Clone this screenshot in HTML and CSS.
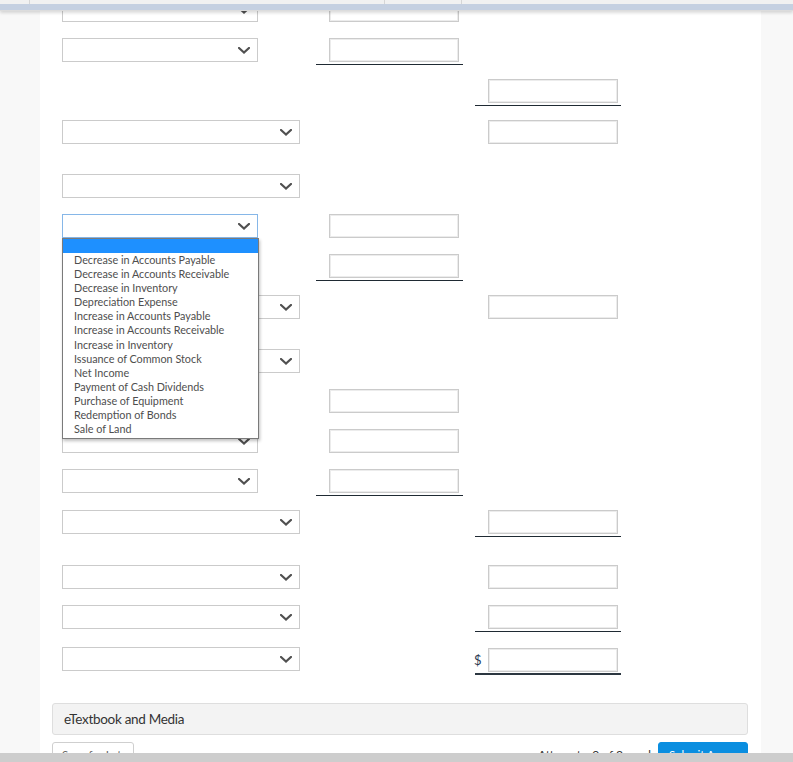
FILE: index.html
```html
<!DOCTYPE html>
<html lang="en">
<head>
<meta charset="utf-8">
<title>Statement of Cash Flows</title>
<link rel="stylesheet" href="styles.css">
</head>
<body>
<div class="topbar">
  <div class="tabs"><span class="tab tab-a"></span><span class="tab tab-b"></span><span class="tab tab-c"></span></div>
  <div class="band"></div>
</div>

<main class="page">
  <section class="panel">
    <div class="rows">
      <!-- r0 -->
      <div class="row first">
        <div class="c1"><div class="sel short"><svg class="chev" viewBox="0 0 12 7"><polyline points="1,1 6,5.5 11,1"/></svg></div></div>
        <div class="c2"><div class="inp"></div></div>
      </div>
      <!-- r1 -->
      <div class="row u">
        <div class="c1"><div class="sel short"><svg class="chev" viewBox="0 0 12 7"><polyline points="1,1 6,5.5 11,1"/></svg></div></div>
        <div class="c2 line"><div class="inp"></div></div>
      </div>
      <!-- r2 -->
      <div class="row u">
        <div class="c3 line"><div class="inp"></div></div>
      </div>
      <!-- r3 -->
      <div class="row gap">
        <div class="c1"><div class="sel long"><svg class="chev" viewBox="0 0 12 7"><polyline points="1,1 6,5.5 11,1"/></svg></div></div>
        <div class="c3"><div class="inp"></div></div>
      </div>
      <!-- r4 -->
      <div class="row">
        <div class="c1"><div class="sel long"><svg class="chev" viewBox="0 0 12 7"><polyline points="1,1 6,5.5 11,1"/></svg></div></div>
      </div>
      <!-- r5 (open) -->
      <div class="row">
        <div class="c1">
          <div class="sel short focus"><svg class="chev" viewBox="0 0 12 7"><polyline points="1,1 6,5.5 11,1"/></svg>
            <ul class="dropdown">
              <li class="picked">&nbsp;</li>
              <li>Decrease in Accounts Payable</li>
              <li>Decrease in Accounts Receivable</li>
              <li>Decrease in Inventory</li>
              <li>Depreciation Expense</li>
              <li>Increase in Accounts Payable</li>
              <li>Increase in Accounts Receivable</li>
              <li>Increase in Inventory</li>
              <li>Issuance of Common Stock</li>
              <li>Net Income</li>
              <li>Payment of Cash Dividends</li>
              <li>Purchase of Equipment</li>
              <li>Redemption of Bonds</li>
              <li>Sale of Land</li>
            </ul>
          </div>
        </div>
        <div class="c2"><div class="inp"></div></div>
      </div>
      <!-- r6 -->
      <div class="row u">
        <div class="c1"><div class="sel short"><svg class="chev" viewBox="0 0 12 7"><polyline points="1,1 6,5.5 11,1"/></svg></div></div>
        <div class="c2 line"><div class="inp"></div></div>
      </div>
      <!-- r7 -->
      <div class="row gap">
        <div class="c1"><div class="sel long"><svg class="chev" viewBox="0 0 12 7"><polyline points="1,1 6,5.5 11,1"/></svg></div></div>
        <div class="c3"><div class="inp"></div></div>
      </div>
      <!-- r8 -->
      <div class="row">
        <div class="c1"><div class="sel long"><svg class="chev" viewBox="0 0 12 7"><polyline points="1,1 6,5.5 11,1"/></svg></div></div>
      </div>
      <!-- r9 -->
      <div class="row">
        <div class="c1"><div class="sel short"><svg class="chev" viewBox="0 0 12 7"><polyline points="1,1 6,5.5 11,1"/></svg></div></div>
        <div class="c2"><div class="inp"></div></div>
      </div>
      <!-- r10 -->
      <div class="row">
        <div class="c1"><div class="sel short"><svg class="chev" viewBox="0 0 12 7"><polyline points="1,1 6,5.5 11,1"/></svg></div></div>
        <div class="c2"><div class="inp"></div></div>
      </div>
      <!-- r11 -->
      <div class="row u">
        <div class="c1"><div class="sel short"><svg class="chev" viewBox="0 0 12 7"><polyline points="1,1 6,5.5 11,1"/></svg></div></div>
        <div class="c2 line"><div class="inp"></div></div>
      </div>
      <!-- r12 -->
      <div class="row u gap">
        <div class="c1"><div class="sel long"><svg class="chev" viewBox="0 0 12 7"><polyline points="1,1 6,5.5 11,1"/></svg></div></div>
        <div class="c3 line"><div class="inp"></div></div>
      </div>
      <!-- r13 -->
      <div class="row">
        <div class="c1"><div class="sel long"><svg class="chev" viewBox="0 0 12 7"><polyline points="1,1 6,5.5 11,1"/></svg></div></div>
        <div class="c3"><div class="inp"></div></div>
      </div>
      <!-- r14 -->
      <div class="row u wide">
        <div class="c1"><div class="sel long"><svg class="chev" viewBox="0 0 12 7"><polyline points="1,1 6,5.5 11,1"/></svg></div></div>
        <div class="c3 line"><div class="inp"></div></div>
      </div>
      <!-- r15 -->
      <div class="row last">
        <div class="c1"><div class="sel long"><svg class="chev" viewBox="0 0 12 7"><polyline points="1,1 6,5.5 11,1"/></svg></div></div>
        <div class="c3 dline total"><span class="dollar">$</span><div class="inp"></div></div>
      </div>
    </div>

    <div class="etext">eTextbook and Media</div>

    <div class="actions">
      <button class="btn save">Save for Later</button>
      <div class="right">
        <span class="attempts">Attempts: 0 of 3 used</span>
        <button class="btn submit">Submit Answer</button>
      </div>
    </div>
  </section>
</main>

<div class="bottombar"></div>
</body>
</html>
```

FILE: styles.css
```css
* { box-sizing: border-box; }

html, body {
  margin: 0;
  padding: 0;
}

body {
  background: #f8f8f8;
  font-family: Lato, "Liberation Sans", sans-serif;
  color: #333;
  overflow: hidden;
  height: 762px;
}

/* top overlay bar */
.topbar {
  position: fixed;
  top: 0;
  left: 0;
  right: 0;
  z-index: 50;
  box-shadow: 0 2px 3px rgba(0, 0, 0, 0.14);
}
.tabs {
  height: 4px;
  background: #f1f1f1;
  display: flex;
}
.tab { border-right: 1px solid #d6d6d6; height: 4px; }
.tab-a { width: 30px; }
.tab-b { width: 355px; }
.tab-c { width: 77px; }
.band {
  height: 6px;
  background: #c5d0e1;
  border-bottom: 1px solid #dcdcdc;
  box-sizing: content-box;
}

.bottombar {
  position: fixed;
  left: 0;
  right: 0;
  bottom: 0;
  height: 9px;
  background: #cdcdcd;
  z-index: 50;
}

/* page */
.page {
  padding: 0 32px 0 40px;
}
.panel {
  background: #fff;
  padding: 0 13px 20px 12px;
  min-height: 762px;
}

.rows {
  padding-left: 10px;
  margin-top: -2px;
}

.row {
  display: grid;
  grid-template-columns: 242px 147px 146px;
  column-gap: 12px;
  height: 24px;
  align-items: start;
  margin-bottom: 16px;
}
.row.u { margin-bottom: 17px; }
.row.gap { margin-bottom: 30px; }
.row.u.gap { margin-bottom: 31px; }
.row.wide { margin-bottom: 18px; }
.row.last { margin-bottom: 32px; }

.c1 { grid-column: 1; }
.c2 { grid-column: 2; padding-left: 13px; }
.c3 { grid-column: 3; padding-left: 13px; }

.line {
  padding-bottom: 2px;
  border-bottom: 1px solid #1f2a33;
}
.dline {
  padding-bottom: 1px;
  border-bottom: 2px solid #2c3741;
}
.total {
  display: flex;
  align-items: center;
  padding-left: 0;
}
.dollar {
  width: 13px;
  font-family: Lato, "Liberation Sans", sans-serif;
  font-size: 13px;
  color: #2b3a52;
  line-height: 24px;
  padding-top: 1px;
  margin-left: -1px;
  margin-right: 1px;
}

.inp {
  width: 130px;
  height: 24px;
  background: #fff;
  border: 1px solid #cbcbcb;
  box-shadow: inset 0 0 0 1px #ececec;
}

.sel {
  position: relative;
  height: 24px;
  background: #fff;
  border: 1px solid #cbcbcb;
  display: flex;
  align-items: center;
  justify-content: flex-end;
  padding-right: 7px;
}
.sel.short { width: 196px; }
.sel.long { width: 238px; }
.sel.focus { border-color: #86b7e8; }

.chev {
  width: 12px;
  height: 7px;
  margin-top: 1px;
}
.chev polyline {
  fill: none;
  stroke: #505050;
  stroke-width: 2.2;
  stroke-linecap: square;
}

.dropdown {
  position: absolute;
  top: 23px;
  left: -1px;
  width: 197px;
  margin: 0;
  padding: 0 0 2px;
  list-style: none;
  background: #fff;
  border: 1px solid #7a7a7a;
  box-shadow: 1px 2px 3px rgba(0, 0, 0, 0.25);
  z-index: 20;
  font-size: 10.8px;
  color: #4e4e4e;
}
.dropdown li {
  height: 14.1px;
  line-height: 14.1px;
  padding-left: 11px;
  white-space: nowrap;
}
.dropdown li.picked {
  background: #1e90ff;
  height: 14px;
}

/* bottom */
.etext {
  height: 32px;
  background: #f3f3f3;
  border: 1px solid #dedede;
  border-radius: 3px;
  display: flex;
  align-items: center;
  padding-left: 11px;
  font-size: 13.5px;
  color: #333;
  letter-spacing: -0.3px;
}

.actions {
  display: flex;
  justify-content: space-between;
  align-items: flex-start;
  margin-top: 7px;
}
.right {
  display: flex;
  align-items: flex-start;
  gap: 7px;
}
.btn {
  display: block;
  font-family: Lato, "Liberation Sans", sans-serif;
  font-size: 11.5px;
  line-height: 16px;
  border-radius: 3px;
  padding: 4px 9px 12px;
  white-space: nowrap;
  text-align: left;
}
.save {
  width: 82px;
  background: #fff;
  border: 1px solid #cfcfcf;
  color: #666;
}
.submit {
  width: 90px;
  background: #0a8ee0;
  border: 1px solid #0a8ee0;
  color: #fff;
  padding-left: 10px;
}
.attempts {
  font-size: 12px;
  color: #333;
  line-height: 16px;
  padding-top: 5px;
}
```
